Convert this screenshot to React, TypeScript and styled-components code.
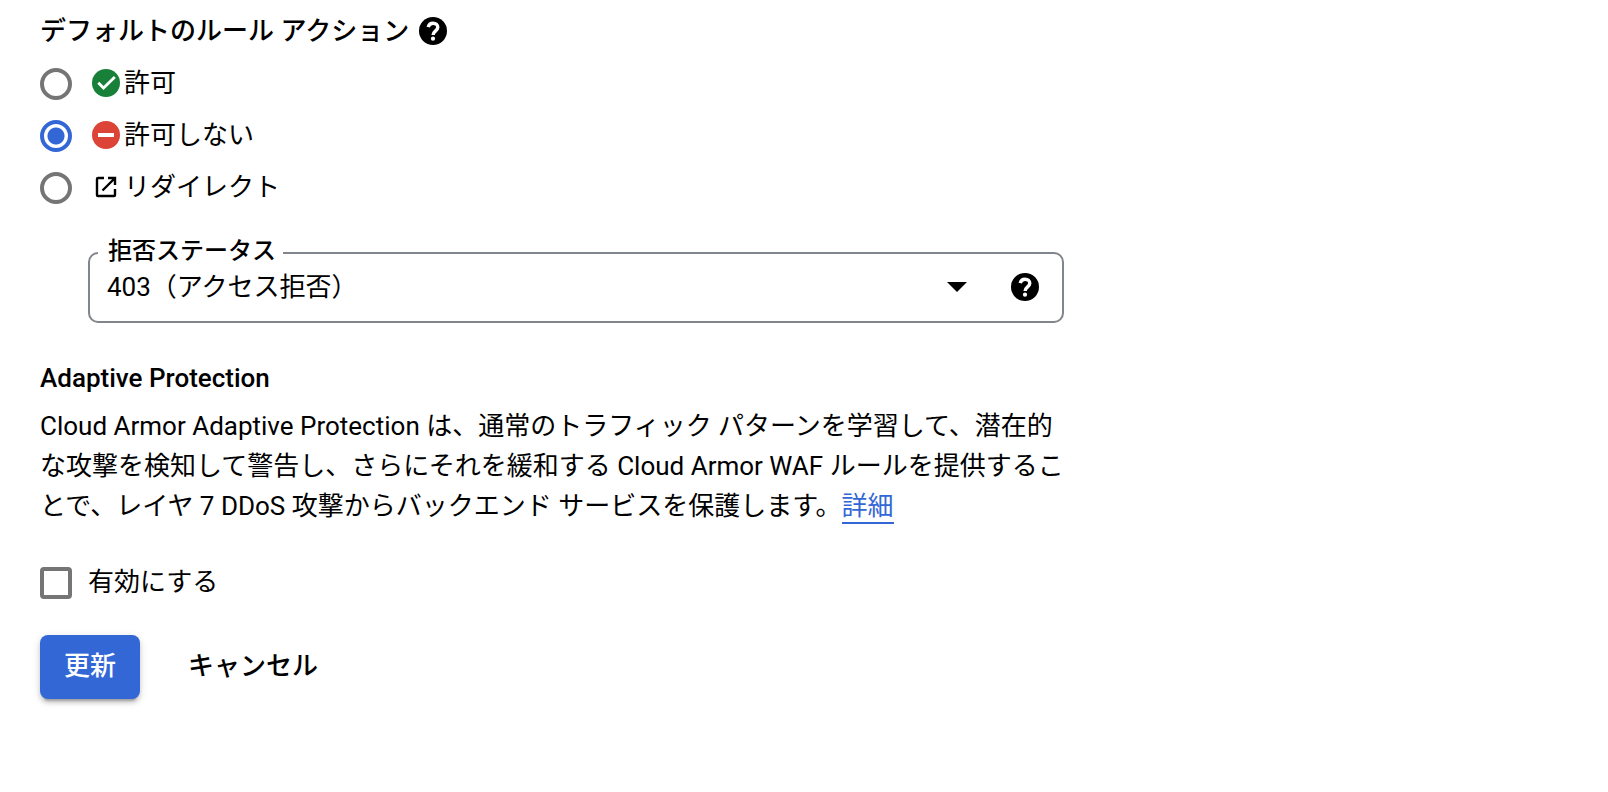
import React, { useState } from 'react';
import styled, { createGlobalStyle } from 'styled-components';

const GlobalStyle = createGlobalStyle`
  *, *::before, *::after { box-sizing: border-box; }
  body {
    margin: 0;
    background: #fff;
    color: #000;
    font: 400 26px/40px Roboto, "Noto Sans CJK JP", sans-serif;
  }
`;

const Form = styled.form`
  max-width: 1104px;
  padding: 8px 40px 40px;
`;

const Group = styled.fieldset`
  margin: 0;
  padding: 0;
  border: 0;
  min-width: 0;
`;

const GroupTitle = styled.legend`
  display: flex;
  align-items: center;
  gap: 8px;
  height: 46px;
  margin-bottom: 4px;
  padding: 0;
  font-weight: 500;
`;

const HelpButton = styled.button`
  display: flex;
  padding: 0;
  border: 0;
  background: none;
  color: inherit;
  cursor: pointer;
`;

const Icon = styled.svg`
  display: block;
  flex: none;
  width: 32px;
  height: 32px;
`;

const Option = styled.label`
  display: flex;
  align-items: center;
  height: 52px;
`;

const OptionText = styled.span`
  display: flex;
  align-items: center;
  gap: 2px;
  padding-bottom: 2px;
`;

const Radio = styled.input`
  appearance: none;
  flex: none;
  width: 32px;
  height: 32px;
  margin: 0 18px 0 0;
  border: 4px solid #757575;
  border-radius: 50%;
  &:checked {
    border-color: #3367d6;
    background: radial-gradient(circle, #3367d6 8px, transparent 9px);
  }
`;

const Outline = styled.fieldset`
  display: flex;
  align-items: center;
  min-width: 0;
  height: 86px;
  margin: 23px 0 0 48px;
  padding: 0 21px 16px 8px;
  border: 2px solid #80868b;
  border-radius: 10px;
`;

const OutlineLabel = styled.legend`
  padding: 0 7px 4px 10px;
  font-size: 24px;
  font-weight: 500;
  line-height: 28px;
`;

const Select = styled.select`
  appearance: none;
  flex: 1;
  min-width: 0;
  height: 40px;
  padding: 0 9px 4px;
  border: 0;
  background: none;
  color: inherit;
  font: inherit;
`;

const Arrow = styled.svg`
  flex: none;
  width: 20px;
  height: 10px;
  margin-right: 42px;
  pointer-events: none;
`;

const Heading = styled.h3`
  margin: 35px 0 8px;
  font: inherit;
  font-weight: 500;
`;

const Description = styled.p`
  margin: 0;
`;

const Link = styled.a`
  padding-bottom: 1px;
  border-bottom: 2px solid #3367d6;
  color: #3367d6;
  text-decoration: none;
`;

const CheckOption = styled.label`
  display: flex;
  align-items: center;
  gap: 16px;
  margin-top: 36px;
`;

const Checkbox = styled.input`
  appearance: none;
  flex: none;
  width: 32px;
  height: 32px;
  margin: 0;
  border: 4px solid #757575;
  border-radius: 4px;
  &:checked { background: #3367d6; border-color: #3367d6; }
`;

const Actions = styled.div`
  display: flex;
  gap: 24px;
  margin-top: 31px;
`;

const Button = styled.button<{ $primary?: boolean }>`
  height: 64px;
  padding: 0 24px 2px;
  border: 0;
  border-radius: 8px;
  font: inherit;
  font-weight: 500;
  background: ${(p) => (p.$primary ? '#3367d6' : 'transparent')};
  color: ${(p) => (p.$primary ? '#fff' : '#000')};
  box-shadow: ${(p) =>
    p.$primary
      ? '0 6px 2px -4px rgba(0,0,0,.2), 0 4px 4px rgba(0,0,0,.14), 0 2px 10px rgba(0,0,0,.12)'
      : 'none'};
  cursor: pointer;
`;

const Help = ({ label }: { label: string }) => (
  <HelpButton type="button" aria-label={label}>
    <Icon viewBox="0 0 32 32" aria-hidden="true">
      <circle cx="16" cy="16" r="14" />
      <path
        d="M11.2 12.2C11.8 9.6 13.6 8.2 16 8.2c2.8 0 4.8 1.7 4.8 4.1 0 3.4-4.7 3.8-4.7 7.7"
        fill="none"
        stroke="#fff"
        strokeWidth="3.4"
      />
      <circle cx="16" cy="23.7" r="2.1" fill="#fff" />
    </Icon>
  </HelpButton>
);

const AllowIcon = () => (
  <Icon viewBox="0 0 32 32" aria-hidden="true">
    <circle cx="16" cy="16" r="14" fill="#188038" />
    <path d="M8.3 15.8l5.2 5.2L24.8 10" fill="none" stroke="#fff" strokeWidth="2.8" />
  </Icon>
);

const DenyIcon = () => (
  <Icon viewBox="0 0 32 32" aria-hidden="true">
    <circle cx="16" cy="16" r="14" fill="#db4437" />
    <path d="M8 14h16v4H8z" fill="#fff" />
  </Icon>
);

const RedirectIcon = () => (
  <Icon viewBox="0 0 32 32" aria-hidden="true">
    <path
      d="M14 7H8a1 1 0 0 0-1 1v16a1 1 0 0 0 1 1h16a1 1 0 0 0 1-1v-6M18 7h7v7M25 7L12.5 19.5"
      fill="none"
      stroke="#000"
      strokeWidth="2.4"
    />
  </Icon>
);

const actions = [
  { id: 'allow', text: '許可', Glyph: AllowIcon },
  { id: 'deny', text: '許可しない', Glyph: DenyIcon },
  { id: 'redirect', text: 'リダイレクト', Glyph: RedirectIcon },
];

export default function App() {
  const [action, setAction] = useState('deny');
  return (
    <>
      <GlobalStyle />
      <Form onSubmit={(e) => e.preventDefault()}>
        <Group>
          <GroupTitle>
            デフォルトのルール アクション
            <Help label="ルール アクションのヘルプ" />
          </GroupTitle>
          {actions.map(({ id, text, Glyph }) => (
            <Option key={id}>
              <Radio type="radio" name="action" checked={action === id} onChange={() => setAction(id)} />
              <OptionText>
                <Glyph />
                {text}
              </OptionText>
            </Option>
          ))}
        </Group>
        <Outline>
          <OutlineLabel>
            <label htmlFor="status">拒否ステータス</label>
          </OutlineLabel>
          <Select id="status" defaultValue="403">
            <option value="403">403（アクセス拒否）</option>
          </Select>
          <Arrow viewBox="0 0 20 10" aria-hidden="true">
            <path d="M0 0h20L10 10z" />
          </Arrow>
          <Help label="拒否ステータスのヘルプ" />
        </Outline>
        <Heading>Adaptive Protection</Heading>
        <Description>
          Cloud Armor Adaptive Protection は、通常のトラフィック パターンを学習して、潜在的な攻撃を検知して警告し、さらにそれを緩和する Cloud Armor WAF ルールを提供することで、レイヤ 7 DDoS 攻撃からバックエンド サービスを保護します。<Link href="#details">詳細</Link>
        </Description>
        <CheckOption>
          <Checkbox type="checkbox" />
          <OptionText>有効にする</OptionText>
        </CheckOption>
        <Actions>
          <Button type="submit" $primary>更新</Button>
          <Button type="button">キャンセル</Button>
        </Actions>
      </Form>
    </>
  );
}
